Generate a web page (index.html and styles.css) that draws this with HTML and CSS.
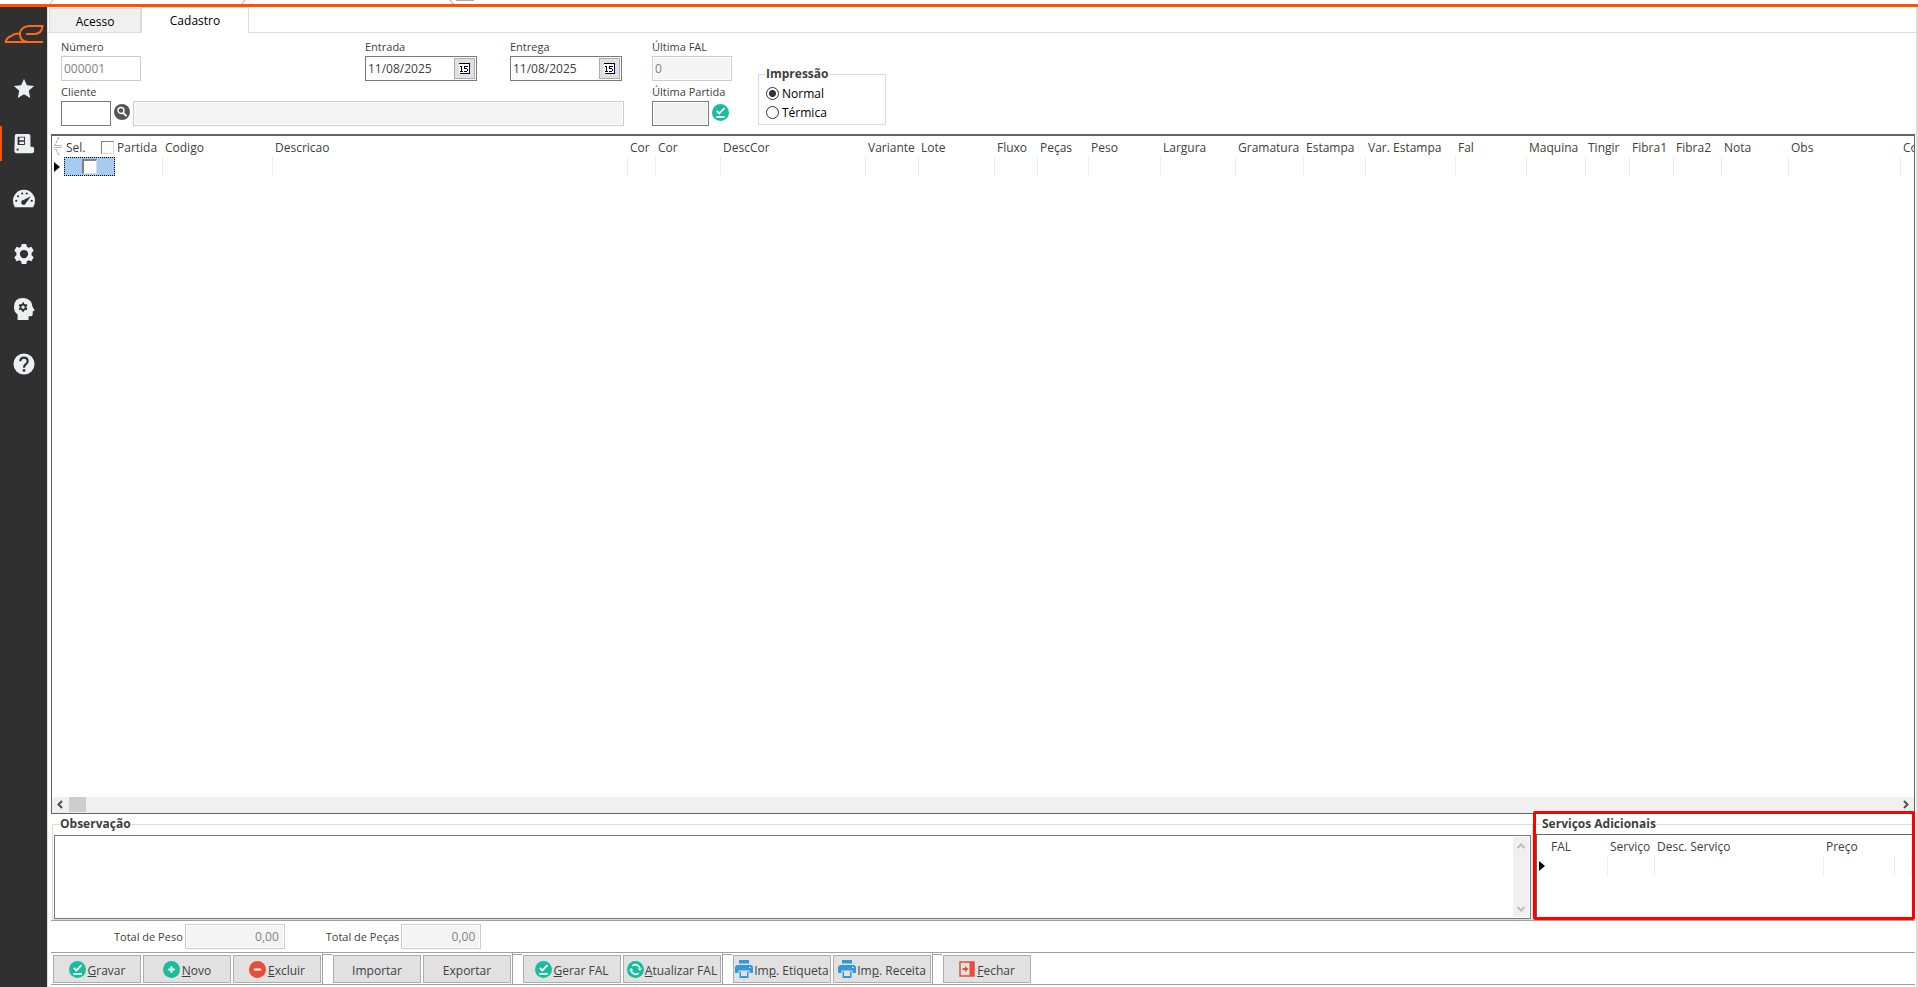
FILE: index.html
```html
<!DOCTYPE html>
<html lang="pt-BR">
<head>
<meta charset="utf-8">
<title>Cadastro</title>
<link rel="stylesheet" href="styles.css">
</head>
<body>
<svg class="defs" width="0" height="0" aria-hidden="true">
  <symbol id="check" viewBox="0 0 16 16"><circle cx="8" cy="8" r="8" fill="#1abc9c"/><path d="M4.500 6.500l2.300 2.300 5-5" fill="none" stroke="#fff" stroke-width="1.700"/><path d="M4 12.200h8" stroke="#fff" stroke-width="1.600"/></symbol>
  <symbol id="plus" viewBox="0 0 16 16"><circle cx="8" cy="8" r="8" fill="#1abc9c"/><path d="M8 5v6M5 8h6" stroke="#fff" stroke-width="1.800"/></symbol>
  <symbol id="minus" viewBox="0 0 16 16"><circle cx="8" cy="8" r="8" fill="#e74c3c"/><path d="M4.500 8h7" stroke="#fff" stroke-width="2"/></symbol>
  <symbol id="refresh" viewBox="0 0 16 16"><circle cx="8" cy="8" r="8" fill="#1abc9c"/><path d="M5 4.600a4.400 4.400 0 0 1 7.200 2.200M11 11.400a4.400 4.400 0 0 1-7.200-2.200" fill="none" stroke="#fff" stroke-width="1.500"/><path d="M10 7h4.200l-2 2.400zM6 9H1.800l2-2.400z" fill="#fff"/></symbol>
  <symbol id="printer" viewBox="0 0 18 18"><path d="M4 0h10v3.500H4zM3 5h12a3 3 0 0 1 3 3v5h-3.500v-2.500h-11V13H0V8a3 3 0 0 1 3-3zM4.500 11.500h9V18h-9z" fill="#3498db"/><path d="M6 11h6v5H6z" fill="#e1e1e1"/><path d="M14 7.500h1.500" stroke="#fff"/></symbol>
  <symbol id="exit" viewBox="0 0 16 16"><path d="M1 1h14v14H1z" fill="none" stroke="#e74c3c" stroke-width="1.500"/><path d="M10.500 1H15v14h-4.500z" fill="#e74c3c"/><path d="M3.500 8h3" stroke="#e74c3c" stroke-width="2"/><path d="M6 5l3.500 3L6 11z" fill="#e74c3c"/></symbol>
  <symbol id="calendar" viewBox="0 0 12 12"><path d="M0 0h11v11H0z" fill="#fff"/><path d="M0 0h11v1H0z" fill="#000"/><path d="M1 10h10v1H1zM10 1h1v10h-1z" fill="#000080"/><path d="M1 3h2v5h1v1H1V8h1V4H1zM5 3h4v1H6v1h2v1h1v2H8v1H5V8h3V6H5z" fill="#000"/></symbol>
</svg>

<div class="topbar">
  <svg width="480" height="4" viewBox="0 0 480 4" aria-hidden="true"><path d="M53 0l-3 4" stroke="#c4c4c4"/><path d="M245 0l-3 4M450 0q1 3 4 4" fill="none" stroke="#ff8a50"/><path d="M456 0h18" stroke="#aaa" stroke-width="2"/></svg>
</div>
<div class="app">
  <nav class="sidebar" aria-label="Menu">
    <svg class="logo" width="40" height="20" viewBox="0 0 40 20" fill="none" stroke="#ff6a13" stroke-width="2"><path d="M39 18H25q-9 0-9-7.500T25 2h13.500q-.5 8-8.500 8h-8"/><path d="M1 18h24M1.500 18q1.500-5 6-6 2-2.500 8.500-2.500"/></svg>
    <button class="nav" aria-label="Favoritos"><svg viewBox="0 0 24 24"><path d="M12 1l3.200 7 7.800.800-5.800 5.200 1.600 7.700-6.800-3.900-6.800 3.900L6.800 14 1 8.800 8.800 8z"/></svg></button>
    <button class="nav active" aria-label="Cadastros"><svg viewBox="0 0 24 24"><path fill-rule="evenodd" d="M2 3q0-2 2-2h13q2 0 2 2v12h2q2 0 2 2v3q0 2-2 2H4q-2.500 0-2.500-3zM5 4v9h8V4zM4 17v2h2v-2z"/><path d="M7 5h5v3H7zM7 9.500h5v2.500H7z"/></svg></button>
    <button class="nav" aria-label="Painel"><svg viewBox="0 0 24 24"><path d="M12 2a12 12 0 0 1 12 12q0 4-2 7H2q-2-3-2-7A12 12 0 0 1 12 2z"/><path class="cut" d="M19.500 9l-5.500 7.500a2.600 2.600 0 1 1-2.600-3.300z"/><g class="cut"><circle cx="3.500" cy="14" r="1.200"/><circle cx="5.500" cy="9" r="1.200"/><circle cx="10" cy="6" r="1.200"/><circle cx="15" cy="6" r="1.200"/><circle cx="20.500" cy="14" r="1.200"/></g></svg></button>
    <button class="nav" aria-label="Configurações"><svg viewBox="0 0 24 24"><path fill-rule="evenodd" d="M9.500 1h5l.7 3.100 1.900 1.100 3-1 2.500 4.300-2.300 2.100v2.800l2.300 2.100-2.500 4.300-3-1-1.900 1.100-.7 3.100h-5l-.7-3.100-1.900-1.100-3 1-2.500-4.300 2.300-2.100v-2.800L1.400 8.500l2.500-4.300 3 1 1.900-1.100zM12 7.500a4.500 4.500 0 1 0 0 9 4.500 4.500 0 0 0 0-9z"/></svg></button>
    <button class="nav" aria-label="Inteligência"><svg viewBox="0 0 24 24"><path d="M11 0c6 0 10 4 10 9l2.500 4q0 1.500-2 1.500V18q0 2-2 2H17v4H5v-6q-4-3-4-8 0-10 10-10z"/><g fill="none" stroke="#303030" stroke-width="2"><circle cx="11" cy="10" r="2.800"/><path d="M11 5v2M11 13v2M6.700 7.500l1.700 1M13.600 11.500l1.700 1M6.700 12.500l1.700-1M13.600 8.500l1.700-1"/></g></svg></button>
    <button class="nav" aria-label="Ajuda"><svg viewBox="0 0 24 24"><circle cx="12" cy="12" r="11.500"/><path d="M8 9q0-4 4-4t4 4q0 2-2 3.300T12 16" fill="none" stroke="#303030" stroke-width="2.400"/><circle class="cut" cx="12" cy="19" r="1.500"/></svg></button>
  </nav>

  <main class="content">
    <div class="tabs" role="tablist">
      <button class="tab" role="tab">Acesso</button>
      <button class="tab current" role="tab" aria-selected="true">Cadastro</button>
    </div>

    <form class="form">
      <div class="main-fields">
        <div class="field w-number"><label for="numero">Número</label><input id="numero" value="000001" disabled></div>
        <div class="field"><label for="entrada">Entrada</label><div class="date"><input id="entrada" value="11/08/2025"><button type="button" aria-label="Abrir calendário de entrada"><svg width="12" height="12"><use href="#calendar"/></svg></button></div></div>
        <div class="field"><label for="entrega">Entrega</label><div class="date"><input id="entrega" value="11/08/2025"><button type="button" aria-label="Abrir calendário de entrega"><svg width="12" height="12"><use href="#calendar"/></svg></button></div></div>
        <div class="field client"><label for="cliente">Cliente</label>
          <div class="line"><input id="cliente" class="w-code"><button type="button" class="round" aria-label="Pesquisar cliente"><svg width="16" height="16" viewBox="0 0 16 16"><circle cx="8" cy="8" r="8" fill="#555"/><circle cx="7" cy="6.500" r="3" fill="none" stroke="#fff" stroke-width="1.300"/><path d="M9.200 8.800l3.300 3.300" stroke="#fff" stroke-width="1.800"/></svg></button><input class="client-name" aria-label="Nome do cliente" disabled></div>
        </div>
      </div>
      <div class="last-fields">
        <div class="field w-number"><label for="fal">Última FAL</label><input id="fal" class="shade" value="0" disabled></div>
        <div class="field"><label for="partida">Última Partida</label>
          <div class="line"><input id="partida" class="w-lot" readonly><button type="button" class="round" aria-label="Confirmar partida"><svg width="17" height="17"><use href="#check"/></svg></button></div></div>
      </div>
      <fieldset class="print">
        <legend>Impressão</legend>
        <label><input type="radio" name="print" checked>Normal</label>
        <label><input type="radio" name="print">Térmica</label>
      </fieldset>
    </form>

    <section class="grid">
      <svg class="corner" width="10" height="20" viewBox="0 0 10 20" fill="none" stroke="#999" aria-hidden="true"><path d="M5 1L1 9M5 19l-4-7" stroke-dasharray="3 1"/><path d="M0 9.500h8M0 11.500h8" stroke="#bbb"/></svg>
      <table class="items">
        <colgroup><col class="c12"><col class="c51"><col class="c48"><col class="c110"><col class="c355"><col class="c28"><col class="c65"><col class="c145"><col class="c53"><col class="c76"><col class="c43"><col class="c51"><col class="c72"><col class="c75"><col class="c68"><col class="c62"><col class="c90"><col class="c71"><col class="c59"><col class="c44"><col class="c44"><col class="c48"><col class="c67"><col class="c112"><col class="c80"></colgroup>
        <thead><tr><th></th><th><span class="select-head">Sel.<input type="checkbox" aria-label="Selecionar todos"></span></th><th>Partida</th><th>Codigo</th><th>Descricao</th><th>Cor</th><th>Cor</th><th>DescCor</th><th>Variante</th><th>Lote</th><th>Fluxo</th><th>Peças</th><th>Peso</th><th>Largura</th><th>Gramatura</th><th>Estampa</th><th>Var. Estampa</th><th>Fal</th><th>Maquina</th><th>Tingir</th><th>Fibra1</th><th>Fibra2</th><th>Nota</th><th>Obs</th><th>Co</th></tr></thead>
        <tbody><tr><td class="mark"><svg width="6" height="10"><path d="M0 0l6 5-6 5z"/></svg></td><td class="selected"><input type="checkbox" aria-label="Selecionar linha"></td><td></td><td></td><td></td><td></td><td></td><td></td><td></td><td></td><td></td><td></td><td></td><td></td><td></td><td></td><td></td><td></td><td></td><td></td><td></td><td></td><td></td><td></td><td></td></tr></tbody>
      </table>
      <div class="hscroll">
        <svg width="17" height="15"><path d="M10 4L6.500 7.500 10 11"/></svg><span class="thumb"></span><svg class="end" width="16" height="15"><path d="M6 4l3.500 3.500L6 11"/></svg>
      </div>
    </section>

    <div class="lower">
      <fieldset class="notes">
        <legend>Observação</legend>
        <div class="notes-box"><textarea aria-label="Observação"></textarea>
          <div class="vscroll"><svg width="16" height="16"><path d="M4.500 11L8 7.500l3.500 3.500"/></svg><svg width="16" height="16"><path d="M4.500 6L8 9.500 11.500 6"/></svg></div>
        </div>
      </fieldset>
      <div class="highlight">
        <fieldset class="services">
          <legend>Serviços Adicionais</legend>
          <div class="services-box">
            <table>
              <colgroup><col class="c12"><col class="c59"><col class="c47"><col class="c169"><col class="c71"><col></colgroup>
              <thead><tr><th></th><th>FAL</th><th>Serviço</th><th>Desc. Serviço</th><th>Preço</th><th></th></tr></thead>
              <tbody><tr><td class="mark"><svg width="6" height="10"><path d="M0 0l6 5-6 5z"/></svg></td><td></td><td></td><td></td><td></td><td></td></tr></tbody>
            </table>
          </div>
        </fieldset>
      </div>
    </div>

    <div class="totals">
      <label for="peso">Total de Peso</label><input id="peso" class="shade w-weight" value="0,00" disabled>
      <label for="pecas">Total de Peças</label><input id="pecas" class="shade w-number" value="0,00" disabled>
    </div>

    <div class="actions">
      <div class="group">
        <button class="action"><svg width="17" height="17"><use href="#check"/></svg><span><u>G</u>ravar</span></button>
        <button class="action"><svg width="17" height="17"><use href="#plus"/></svg><span><u>N</u>ovo</span></button>
        <button class="action"><svg width="17" height="17"><use href="#minus"/></svg><span><u>E</u>xcluir</span></button>
      </div>
      <div class="group">
        <button class="action"><span>Importar</span></button>
        <button class="action"><span>Exportar</span></button>
      </div>
      <div class="group">
        <button class="action wide"><svg width="17" height="17"><use href="#check"/></svg><span><u>G</u>erar FAL</span></button>
        <button class="action wide"><svg width="17" height="17"><use href="#refresh"/></svg><span><u>A</u>tualizar FAL</span></button>
      </div>
      <div class="group">
        <button class="action wide"><svg width="18" height="18"><use href="#printer"/></svg><span>Im<u>p</u>. Etiqueta</span></button>
        <button class="action wide"><svg width="18" height="18"><use href="#printer"/></svg><span>Im<u>p</u>. Receita</span></button>
      </div>
      <div class="group">
        <button class="action"><svg width="16" height="16"><use href="#exit"/></svg><span><u>F</u>echar</span></button>
      </div>
    </div>
  </main>
</div>
</body>
</html>
```
FILE: styles.css
```css
* { box-sizing: border-box; }
body {
  margin: 0;
  height: 100vh;
  display: flex;
  flex-direction: column;
  overflow: hidden;
  background: #fff;
  color: #404040;
  font: 12px/16px "Open Sans", "Noto Sans", sans-serif;
}
button, input, textarea { font: inherit; color: inherit; margin: 0; border-radius: 0; }
button { padding: 0; border: 0; background: none; }
svg { display: block; flex: none; }
.defs { position: absolute; }

.topbar { height: 7px; flex: none; border-bottom: 3px solid #ff5200; }
.app { flex: 1; display: flex; min-height: 0; }

.sidebar {
  width: 47px;
  flex: none;
  background: #303030;
  padding-top: 17px;
}
.logo { margin: 0 0 27px 4px; }
.nav {
  width: 100%;
  height: 35px;
  margin-bottom: 20px;
  display: flex;
  align-items: center;
  justify-content: center;
}
.nav.active { border-left: 2px solid #ff5200; padding-right: 2px; }
.nav svg { width: 22px; height: 22px; fill: #ecf0f1; }
.nav .cut { fill: #303030; }

.content {
  flex: 1;
  min-width: 0;
  display: flex;
  flex-direction: column;
  border-left: 1px solid #dcdcdc;
  border-right: 2px solid #dcdcdc;
  padding: 0 1px 2px 3px;
}

.tabs {
  display: flex;
  align-items: flex-end;
  flex: none;
  height: 26px;
  margin: 0 -1px 0 -3px;
  padding-left: 1px;
  border-bottom: 1px solid #dcdcdc;
}
.tab {
  width: 92px;
  height: 24px;
  padding-top: 3px;
  background: #f0f0f0;
  border: 1px solid #dcdcdc;
  border-bottom: 0;
  color: #000;
}
.tab.current { width: 108px; height: 26px; margin-bottom: -1px; padding: 0; background: #fff; }

.form { display: flex; flex: none; padding: 6px 10px 8px; }
.main-fields {
  display: grid;
  grid-template-columns: 304px 145px 114px;
  row-gap: 3px;
  width: 563px;
  margin-right: 28px;
}
.last-fields { display: grid; row-gap: 3px; width: 80px; margin-right: 26px; }
.field { display: flex; flex-direction: column; row-gap: 1px; }
.field label, .totals label { font-size: 11px; line-height: 16px; white-space: nowrap; }
.client { grid-column: 1 / -1; }
input, textarea { outline: none; }
input:not([type]) {
  height: 25px;
  padding: 0 2px;
  min-width: 0;
  border: 1px solid #7a7a7a;
  background: #fff;
}
input:not([type]):disabled { border-color: #ccc; color: #838383; }
.client-name:disabled, .shade:disabled { background: #f4f4f4; box-shadow: inset 0 0 0 1px #fff; }
.w-number { width: 80px; }
.w-code { width: 50px; }
.w-weight { width: 100px; }
.w-lot { width: 57px; }
input.w-lot:read-only { background: #f0f0f0; box-shadow: inset 0 0 0 1px #fff; }
.line { display: flex; align-items: center; gap: 3px; }
.round { padding-bottom: 3px; }
.client-name { flex: 1; }
.date { display: flex; width: 112px; height: 25px; border: 1px solid #7a7a7a; padding: 1px; }
.date input:not([type]) { flex: 1; height: 21px; border: 0; padding: 0 1px; }
.date button {
  width: 21px;
  display: flex;
  align-items: center;
  justify-content: center;
  border: 1px solid #adadad;
  background: #e1e1e1;
}

fieldset { margin: 0; min-width: 0; border: 1px solid #dcdcdc; }
legend { padding: 0; font-weight: 700; line-height: 16px; }
.print { width: 128px; margin: 27px 0 1px; padding: 2px 7px 0; color: #000; }
.print legend { color: #404040; }
.print label { display: flex; align-items: center; gap: 3px; height: 19px; }
input[type="radio"] {
  appearance: none;
  width: 13px;
  height: 13px;
  border: 1px solid #333;
  border-radius: 50%;
}
input[type="radio"]:checked { background: radial-gradient(circle, #333 0 3px, #fff 4px); }

.grid {
  flex: 1;
  min-height: 0;
  position: relative;
  display: flex;
  flex-direction: column;
  overflow: hidden;
  border: 1px solid #646464;
  border-top-width: 2px;
}
.corner { position: absolute; left: 2px; top: 0; }
table { table-layout: fixed; border-collapse: separate; border-spacing: 0; width: 100%; }
.items { width: 1929px; }
th {
  height: 21px;
  padding: 2px 1px 0 2px;
  text-align: left;
  font-weight: 400;
  white-space: nowrap;
}
td { height: 19px; padding: 0; border-right: 1px solid #ececec; }
td.mark, td.selected { border-right-color: transparent; }
td.mark { padding-left: 2px; }
td.selected { background: #a6caf0; outline: 1px dotted #000; outline-offset: -1px; }
.select-head { display: flex; align-items: center; justify-content: space-between; }
input[type="checkbox"] {
  appearance: none;
  width: 13px;
  height: 13px;
  background: #fff;
  border: 1px solid;
  border-color: #808080 #dcdcdc #dcdcdc #808080;
}
td input[type="checkbox"] { display: block; width: 15px; height: 15px; margin: 0 auto; border-width: 2px 1px 1px 2px; }
.c12 { width: 12px; } .c28 { width: 28px; } .c43 { width: 43px; } .c44 { width: 44px; }
.c47 { width: 47px; } .c48 { width: 48px; } .c51 { width: 51px; } .c53 { width: 53px; }
.c59 { width: 59px; } .c62 { width: 62px; } .c65 { width: 65px; } .c67 { width: 67px; }
.c68 { width: 68px; } .c71 { width: 71px; } .c72 { width: 72px; } .c75 { width: 75px; }
.c76 { width: 76px; } .c80 { width: 80px; } .c90 { width: 90px; } .c110 { width: 110px; }
.c112 { width: 112px; } .c145 { width: 145px; } .c169 { width: 169px; } .c355 { width: 355px; }

.hscroll { display: flex; height: 16px; margin-top: auto; background: #f0f0f0; }
.hscroll svg { fill: none; stroke: #505050; stroke-width: 2; }
.hscroll .end { margin-left: auto; }
.thumb { width: 17px; height: 15px; background: #cdcdcd; }

.lower { display: flex; flex: none; height: 107px; padding-top: 2px; border-bottom: 1px solid #a0a0a0; }
.notes { flex: 1; margin-left: 1px; padding: 3px 1px 0; display: flex; flex-direction: column; }
.notes legend { margin-left: 6px; }
.notes-box { display: flex; flex: 1; min-height: 84px; border: 1px solid #7a7a7a; padding: 1px; }
textarea { flex: 1; border: 0; resize: none; overflow: hidden; padding: 2px; }
.vscroll { display: flex; flex-direction: column; justify-content: space-between; background: #f0f0f0; }
.vscroll svg { fill: none; stroke: #bcbcbc; stroke-width: 2; }
.highlight { position: relative; width: 382px; }
.highlight::after {
  content: "";
  position: absolute;
  inset: -5px 0 0;
  border: 3px solid #f00;
  border-radius: 2px;
  pointer-events: none;
}
.services { padding: 2px 2px 0; }
.services legend { margin-left: 6px; }
.services-box { height: 84px; border-top: 1px solid #646464; border-left: 1px solid #646464; }

.totals { display: flex; flex: none; align-items: center; height: 32px; padding-left: 63px; border-bottom: 1px solid #a0a0a0; }
.totals input { text-align: right; padding-right: 5px; margin: 0 41px 0 2px; }

.actions { display: flex; flex: none; height: 32px; border-bottom: 1px solid #a0a0a0; }
.group { display: flex; gap: 2px; padding: 2px 1px 1px 2px; }
.group + .group {
  padding-left: 10px;
  border-left: 1px solid #a0a0a0;
  background: linear-gradient(#a0a0a0, #a0a0a0) 0 1px / 9px 1px no-repeat;
}
.action {
  width: 88px;
  height: 28px;
  display: flex;
  align-items: center;
  justify-content: center;
  gap: 2px;
  overflow: hidden;
  white-space: nowrap;
  border: 1px solid #adadad;
  background: #e1e1e1;
}
.action.wide { width: 98px; gap: 1px; }
.action span { padding-top: 3px; }
```
